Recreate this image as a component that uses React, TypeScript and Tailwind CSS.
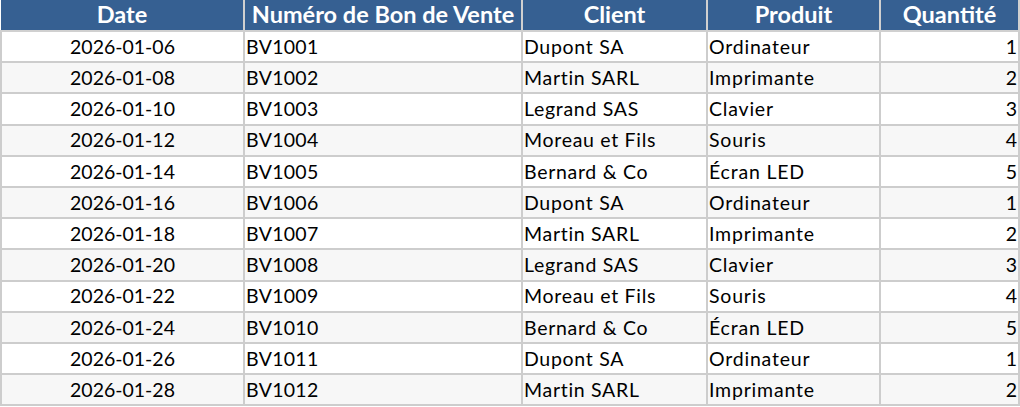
const clients = ["Dupont SA", "Martin SARL", "Legrand SAS", "Moreau et Fils", "Bernard & Co"];
const produits = ["Ordinateur", "Imprimante", "Clavier", "Souris", "Écran LED"];

const rows = Array.from({ length: 12 }, (_, i) => ({
  date: `2026-01-${String(6 + i * 2).padStart(2, "0")}`,
  bon: `BV${1001 + i}`,
  client: clients[i % 5],
  produit: produits[i % 5],
  qte: (i % 5) + 1,
}));

const th = "border-2 border-[#d0d0d0] border-t-0 bg-[#366092] text-white font-bold text-center text-[23.5px] px-0 h-[31px] whitespace-nowrap";
const td = "border-2 border-[#cdcdcd] px-[1px] h-[31.2px] text-black";

export default function App() {
  return (
    <div className="bg-white w-[1020px] h-[407px] overflow-hidden" style={{ fontFamily: "Lato, 'Noto Sans', sans-serif" }}>
      <table className="border-collapse w-[1020px] table-fixed text-[19.5px] leading-none">
        <colgroup>
          <col className="w-[243px]" />
          <col className="w-[278px]" />
          <col className="w-[185px]" />
          <col className="w-[173px]" />
          <col />
        </colgroup>
        <thead>
          <tr>
            <th className={`${th} border-l-0`}>Date</th>
            <th className={th}>Numéro de Bon de Vente</th>
            <th className={th}>Client</th>
            <th className={th}>Produit</th>
            <th className={th}>Quantité</th>
          </tr>
        </thead>
        <tbody>
          {rows.map((r, i) => (
            <tr key={r.bon} className={i % 2 === 0 ? "bg-white" : "bg-[#f7f7f7]"}>
              <td className={`${td} text-center`}>{r.date}</td>
              <td className={`${td} tracking-[0.3px]`}>{r.bon}</td>
              <td className={`${td} tracking-[0.7px]`}>{r.client}</td>
              <td className={`${td} tracking-[0.8px]`}>{r.produit}</td>
              <td className={`${td} text-right`}>{r.qte}</td>
            </tr>
          ))}
        </tbody>
      </table>
    </div>
  );
}
